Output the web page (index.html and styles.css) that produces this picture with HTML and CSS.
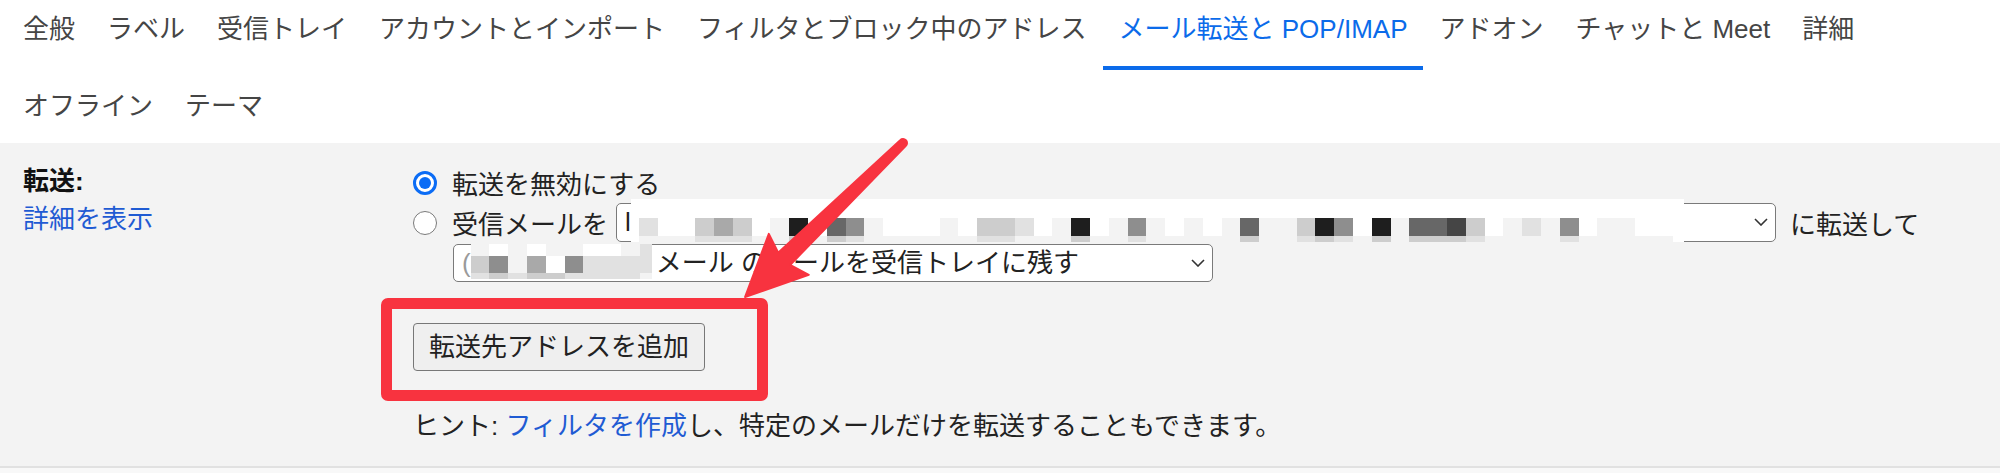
FILE: index.html
```html
<!DOCTYPE html>
<html lang="ja">
<head>
    <meta charset="UTF-8">
    <meta name="viewport" content="width=device-width, initial-scale=1.0">
    <title>設定 - メール転送と POP/IMAP</title>
    <link rel="stylesheet" href="styles.css">
</head>
<body>
    <div class="page">
        <nav class="tabs">
            <a class="tab">全般</a>
            <a class="tab">ラベル</a>
            <a class="tab">受信トレイ</a>
            <a class="tab">アカウントとインポート</a>
            <a class="tab">フィルタとブロック中のアドレス</a>
            <a class="tab active">メール転送と POP/IMAP</a>
            <a class="tab">アドオン</a>
            <a class="tab">チャットと Meet</a>
            <a class="tab">詳細</a>
            <a class="tab">オフライン</a>
            <a class="tab">テーマ</a>
        </nav>

        <div class="section">
            <div class="label-col">
                <div class="label">転送:</div>
                <a class="link">詳細を表示</a>
            </div>
            <div class="options">
                <div class="opt-row">
                    <span class="radio checked"></span>
                    <span>転送を無効にする</span>
                </div>
                <div class="opt-row">
                    <span class="radio"></span>
                    <span>受信メールを</span>
                    <div class="fake-select wide">
                        <span class="sel-text">l</span>
                        <span class="mosaic addr" id="mosaicAddr"></span>
                        <svg class="chevron" viewBox="0 0 14 8"><polyline points="1,1 7,7 13,1"/></svg>
                    </div>
                    <span>に転送して</span>
                </div>
                <div class="opt-row sub">
                    <div class="fake-select narrow">
                        <span class="sel-text faint">(</span>
                        <span class="mosaic small" id="mosaicKeep"></span>
                        <span class="sel-text">メール のメールを受信トレイに残す</span>
                        <svg class="chevron" viewBox="0 0 14 8"><polyline points="1,1 7,7 13,1"/></svg>
                    </div>
                </div>
                <div class="callout">
                    <button class="btn">転送先アドレスを追加</button>
                </div>
                <p class="hint">ヒント: <a class="link">フィルタを作成</a>し、特定のメールだけを転送することもできます。</p>
            </div>
        </div>

        <svg class="annot" viewBox="0 0 2000 473">
            <g transform="translate(903 143) rotate(135.73)">
                <path d="M0,-4 L166,-8.5 L159.5,-28.6 L220.6,0 L159.5,28.6 L166,8.5 L0,4 A4,4 0 0 1 0,-4 Z"/>
            </g>
        </svg>
    </div>

    <script>
        // pixelated (blurred) address blocks
        function buildMosaic(el, rows) {
            rows.forEach(function (r) {
                const row = document.createElement('div');
                row.className = 'm-row';
                row.style.height = r[0] + 'px';
                for (const ch of r[1]) {
                    const cell = document.createElement('span');
                    cell.className = 'c' + ch;
                    row.appendChild(cell);
                }
                el.appendChild(row);
            });
        }

        const addrMain = '2003430180' + '6510001033' + '2018015101' + '0161138508' + '1667301215' + '01100';
        const addrStrip = addrMain.split('').map(function (v) {
            v = +v;
            return v >= 6 ? 3 : v >= 3 ? 2 : 1;
        }).join('');

        buildMosaic(document.getElementById('mosaicAddr'), [
            [19, '0'.repeat(addrMain.length)],
            [18, addrMain],
            [6, addrStrip]
        ]);

        buildMosaic(document.getElementById('mosaicKeep'), [
            [12, '1010110012'],
            [17, '3514052222'],
            [6, '2323322221']
        ]);
    </script>
</body>
</html>
```

FILE: styles.css
```css
body { margin: 0; font-family: "Liberation Sans", "Noto Sans CJK JP", sans-serif; font-size: 26px; color: #222; }
.page { position: relative; width: 2000px; height: 473px; background: #f8f8f8; overflow: hidden; }

.tabs { display: flex; flex-wrap: wrap; row-gap: 11px; height: 143px; padding: 4px 0 0 7px; box-sizing: border-box; background: #fff; overflow: hidden; }
.tab { padding: 6px 16px 18px; line-height: 38px; color: #454545; border-bottom: 4px solid transparent; text-decoration: none; white-space: nowrap; }
.tab.active { color: #0b6bea; border-bottom-color: #0b6bea; }

.section { display: flex; height: 325px; padding: 19px 0 0 23px; box-sizing: border-box; background: #f3f3f3; border-bottom: 2px solid #e1e1e1; }
.label-col { width: 390px; line-height: 38px; }
.label { font-weight: bold; color: #111; }
.link { color: #1f5bd3; text-decoration: none; display: inline-block; }
.label-col .link { display: block; }

.options { display: flex; flex-direction: column; }
.opt-row { display: flex; align-items: center; height: 40px; white-space: nowrap; }
.opt-row.sub { height: 38px; margin-top: 2px; padding-left: 40px; }

.radio { width: 24px; height: 24px; box-sizing: border-box; border: 1.5px solid #7a7a7a; border-radius: 50%; background: #fff; margin: 2px 15px 0 0; display: flex; align-items: center; justify-content: center; }
.radio.checked { border: 3px solid #0b6cf5; }
.radio.checked::after { content: ""; width: 12px; height: 12px; border-radius: 50%; background: #0b6cf5; }

.fake-select { display: flex; align-items: center; height: 39px; box-sizing: border-box; border: 1.5px solid #7a7a7a; border-radius: 5px; background: #fff; padding: 0 7px 0 8px; }
.fake-select.wide { width: 1160px; margin: 0 14px 0 8px; }
.fake-select.narrow { width: 760px; height: 38px; }
.sel-text { line-height: 34px; }
.sel-text.faint { color: #9a9a9a; }
.chevron { width: 14px; height: 8px; margin-left: auto; fill: none; stroke: #333; stroke-width: 1.6; }

.mosaic { display: flex; flex-direction: column; background: #fff; overflow: hidden; }
.mosaic.addr { width: 1053px; padding-left: 8px; box-sizing: border-box; margin-top: -5px; align-self: flex-start; }
.mosaic.small { width: 181px; margin-top: -1px; align-self: flex-start; margin-right: 4px; }
.m-row { display: flex; }
.m-row span { flex: 0 0 18.8px; }
.c0 { background: #fff; }
.c1 { background: #f3f3f3; }
.c2 { background: #e1e1e1; }
.c3 { background: #cdcdcd; }
.c4 { background: #a9a9a9; }
.c5 { background: #8e8e8e; }
.c6 { background: #676767; }
.c7 { background: #454545; }
.c8 { background: #1e1e1e; }

.callout { align-self: flex-start; margin: 16px 0 0 -32px; padding: 14px 52px 19px 21px; border: 11px solid #f8333f; border-radius: 7px; }
.btn { font: inherit; line-height: 38px; padding: 4px 15px; border: 1px solid #777; border-radius: 4px; background: #efefef; color: #222; }

.hint { margin: 6px 0 0; line-height: 38px; white-space: nowrap; }

.annot { position: absolute; left: 0; top: 0; width: 2000px; height: 473px; pointer-events: none; }
.annot path { fill: #f8333f; stroke: #f8333f; stroke-width: 2; stroke-linejoin: round; }
```
